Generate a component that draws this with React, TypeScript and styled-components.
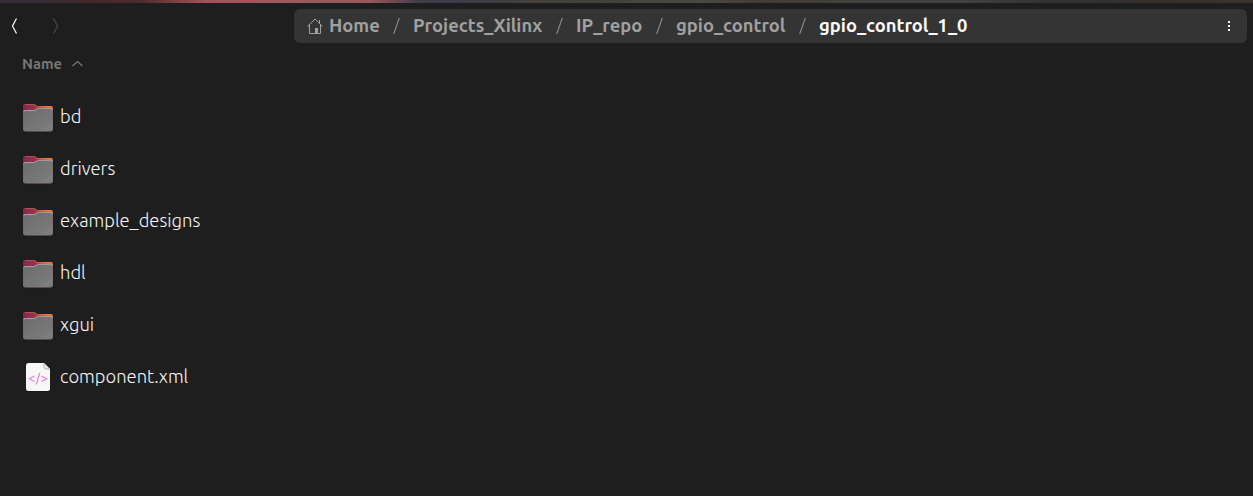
import React from 'react';
import styled, { createGlobalStyle } from 'styled-components';

const GlobalStyle = createGlobalStyle`
  html, body { margin: 0; background: #1e1e1e; }
  body { overflow: hidden; font-family: Ubuntu, "Noto Sans", "Open Sans", sans-serif; }
  svg { display: block; flex: none; }
`;

const Window = styled.main`
  height: 496px;
  display: flex;
  flex-direction: column;
  background: #1e1e1e;
`;

const WallpaperEdge = styled.div`
  height: 3px;
  flex: none;
  background: linear-gradient(90deg, #352c38 0, #352b38 40px, #43292b 90px, #4b2a29 120px, #4b2c2a 140px, #a84f59 205px, #a5545b 250px, #975c5a 300px, #96585a 370px, #413c4b 420px, #3d3b4b 460px, #454139 540px, #43443b 620px, #4b4a41 700px, #433b32 760px, #42423e 860px, #3f4343 960px, #303434 1040px, #352f2c 1150px, #3b322e 1253px);
`;

const Toolbar = styled.header`
  display: flex;
  height: 46px;
  padding: 6px 6px 0 8px;
  box-sizing: border-box;
`;

const NavButtons = styled.nav`
  display: flex;
  width: 286px;
  height: 34px;
  align-items: center;
  gap: 28px;
`;

const NavButton = styled.button<{ $dim?: boolean }>`
  border: 0;
  padding: 0;
  background: none;
  color: ${p => (p.$dim ? '#454545' : '#f0f0f0')};
`;

const PathBar = styled.div`
  flex: 1;
  height: 34px;
  display: flex;
  align-items: center;
  padding: 0 14px 0 13px;
  box-sizing: border-box;
  border-radius: 6px;
  background: #343434;
  color: #a0a0a0;
`;

const Crumb = styled.span<{ $width: number; $current?: boolean }>`
  width: ${p => p.$width}px;
  color: ${p => (p.$current ? '#fafafa' : 'inherit')};
  font-size: 18.35px;
  font-weight: 600;
  line-height: 32px;
  padding-bottom: 2px;
  white-space: nowrap;
`;

const HomeIcon = styled.svg`
  margin-right: 6px;
`;

const Slash = styled.svg`
  margin: 0 13px;
`;

const MenuDots = styled.div`
  display: grid;
  gap: 2px;
  margin-left: auto;
  margin-right: 3px;
`;

const Dot = styled.i`
  width: 2px;
  height: 2px;
  background: #f4f4f4;
`;

const ColumnHeader = styled.div`
  display: flex;
  align-items: center;
  height: 30px;
  padding-left: 22px;
  gap: 9px;
  color: #777;
  font-size: 14.67px;
  font-weight: 700;
`;

const ColumnTitle = styled.span`
  width: 41px;
  line-height: 30px;
`;

const FileList = styled.ul`
  margin: 12px 0 0;
  padding: 0;
  list-style: none;
`;

const FileRow = styled.li`
  display: flex;
  align-items: center;
  height: 52px;
  padding-left: 22px;
  gap: 6px;
`;

const FileName = styled.span`
  color: #f4f4f4;
  font-size: 18.4px;
  font-weight: 340;
  line-height: 50px;
  padding-bottom: 2px;
`;

const FolderIcon = () => (
  <svg width="32" height="32" viewBox="0 0 32 32">
    <defs>
      <linearGradient id="folderBack" x1="0" x2="1">
        <stop offset="0" stopColor="#822850" />
        <stop offset=".4" stopColor="#9c3349" />
        <stop offset=".7" stopColor="#d95f36" />
        <stop offset="1" stopColor="#ec7436" />
      </linearGradient>
      <linearGradient id="folderFront" x1="0" y1="0" x2="1" y2="1">
        <stop offset="0" stopColor="#6c6c6c" />
        <stop offset=".78" stopColor="#7a7a7a" />
        <stop offset=".8" stopColor="#808080" />
        <stop offset="1" stopColor="#797979" />
      </linearGradient>
    </defs>
    <path d="M.3 6V29q0 2.300 2.500 2.300h26.500q2.400 0 2.400-2.300V8z" fill="#151515" />
    <path d="M1 12V5q0-2 2-2h8.500q1.500 0 2.500 1l1 1H29q2 0 2 2v7H1z" fill="url(#folderBack)" />
    <path d="M3 3.500h8.500q1.500 0 2.500 1l1 .9H29" fill="none" stroke="#f0915f" strokeOpacity=".45" strokeWidth=".8" />
    <path d="M1 11q0-2 2-2h8.500q1.500 0 2.500-.8l1.500-.9q.7-.4 2-.4H29q2 0 2 2V28q0 2.500-2.500 2.500h-25Q1 30.500 1 28z" fill="url(#folderFront)" />
    <path d="M1.500 11q0-1.500 2-1.500h8q1.500 0 2.500-.8l1.500-.9q.7-.4 2-.4h11q2 0 2 1.500" fill="none" stroke="#aea3a9" strokeWidth=".9" />
    <path d="M1.300 10v18q0 2.200 2.200 2.200h25q2.200 0 2.200-2.200V10" fill="none" stroke="#85606c" strokeOpacity=".55" strokeWidth=".6" />
  </svg>
);

const XmlIcon = () => (
  <svg width="32" height="32" viewBox="0 0 32 32">
    <path d="M6.500 2H22l6 6v20q0 2.500-2.500 2.500h-19Q4 30.500 4 28V4.500Q4 2 6.500 2z" fill="#111" />
    <path d="M6.500 2H22l6 6v19.500q0 2.500-2.500 2.500h-19Q4 30 4 27.500v-23Q4 2 6.500 2z" fill="#f7f7f7" />
    <path d="M22 2v4q0 2 2 2h4z" fill="#e6e6e6" stroke="#aaa" strokeWidth=".8" />
    <path d="M12.500 15 7.300 17.800l5.200 2.700M19.500 15l5.200 2.800-5.200 2.700M17.700 12l-3.400 11.500" fill="none" stroke="#e583d5" strokeWidth="1.200" />
  </svg>
);

const crumbs = [
  { name: 'Home', width: 51 },
  { name: 'Projects_Xilinx', width: 130 },
  { name: 'IP_repo', width: 67 },
  { name: 'gpio_control', width: 110 },
  { name: 'gpio_control_1_0', width: 149 },
];

const files = [
  { name: 'bd' },
  { name: 'drivers' },
  { name: 'example_designs' },
  { name: 'hdl' },
  { name: 'xgui' },
  { name: 'component.xml', xml: true },
];

export default function App() {
  return (
    <>
      <GlobalStyle />
      <Window>
        <WallpaperEdge />
        <Toolbar>
          <NavButtons>
            <NavButton aria-label="Back">
              <svg width="13" height="18" viewBox="0 0 13 18"><path d="M8.500 1.500 4.500 9l4 7.500" fill="none" stroke="currentColor" strokeWidth="1.300" /></svg>
            </NavButton>
            <NavButton aria-label="Forward" $dim>
              <svg width="13" height="18" viewBox="0 0 13 18"><path d="M4.500 1.500 8.500 9l-4 7.500" fill="none" stroke="currentColor" strokeWidth="1.300" /></svg>
            </NavButton>
          </NavButtons>
          <PathBar>
            <HomeIcon width="16" height="16" viewBox="0 0 16 16">
              <path d="M.5 8.500 8 1l7.500 7.500M2.500 7v8.500h11V7M12.500 2v3" fill="none" stroke="currentColor" />
              <path d="M8 10h3v5H8z" fill="currentColor" />
            </HomeIcon>
            {crumbs.map((c, i) => (
              <React.Fragment key={c.name}>
                {i > 0 && <Slash width="7" height="18" viewBox="0 0 7 18"><path d="M6.300 1 .7 17" stroke="#8c8c8c" strokeWidth="1.100" /></Slash>}
                <Crumb $width={c.width} $current={i === crumbs.length - 1}>{c.name}</Crumb>
              </React.Fragment>
            ))}
            <MenuDots><Dot /><Dot /><Dot /></MenuDots>
          </PathBar>
        </Toolbar>
        <ColumnHeader>
          <ColumnTitle>Name</ColumnTitle>
          <svg width="11" height="8" viewBox="0 0 11 8"><path d="m.5 6 5-4.500 5 4.500" fill="none" stroke="currentColor" strokeWidth="1.200" /></svg>
        </ColumnHeader>
        <FileList>
          {files.map(f => (
            <FileRow key={f.name}>
              {f.xml ? <XmlIcon /> : <FolderIcon />}
              <FileName>{f.name}</FileName>
            </FileRow>
          ))}
        </FileList>
      </Window>
    </>
  );
}
